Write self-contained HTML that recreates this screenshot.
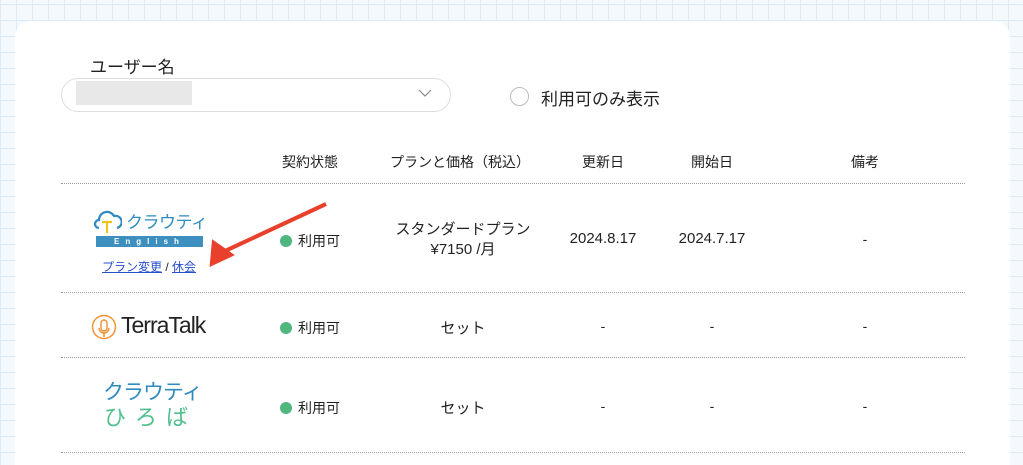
<!DOCTYPE html>
<html style="overflow:hidden;height:465px"><head><meta charset="utf-8"><style>
*{margin:0;padding:0;box-sizing:border-box}
body{width:1023px;height:465px;overflow:hidden;position:relative;font-family:"Liberation Sans","Noto Sans CJK JP",sans-serif;color:#222;
background-color:#f4f9fd;background-image:linear-gradient(#dcebf6 1px,transparent 1px),linear-gradient(90deg,#dcebf6 1px,transparent 1px);background-size:16px 16px;background-position:0 4px}
.card{position:absolute;left:15px;top:21px;width:995px;height:444px;background:#fff;border-radius:16px 16px 0 0}
.a{position:absolute;white-space:nowrap}
.c{position:absolute;text-align:center;transform:translateX(-50%);white-space:nowrap;font-size:14px}
.d{font-size:15px}
.line{position:absolute;left:61px;width:904px;border-top:1px dotted #999}
.dot{display:inline-block;width:12px;height:12px;border-radius:50%;background:#4fb67e;vertical-align:-1px;margin-right:6px}
</style></head><body>
<div class="card"></div>
<div class="a" style="left:90px;top:53px;font-size:17px">ユーザー名</div>
<div class="a" style="left:61px;top:78px;width:390px;height:34px;border:1px solid #ddd;border-radius:17px;background:#fff"></div>
<div class="a" style="left:76px;top:81px;width:116px;height:24px;background:#e8e8e8"></div>
<svg class="a" style="left:418px;top:89px" width="14" height="9"><path d="M1 1l6 6 6-6" fill="none" stroke="#888" stroke-width="1.2"/></svg>
<div class="a" style="left:510px;top:87px;width:19px;height:19px;border:1px solid #bbb;border-radius:50%"></div>
<div class="a" style="left:541px;top:85px;font-size:17px">利用可のみ表示</div>

<div class="c" style="left:310px;top:152px">契約状態</div>
<div class="c" style="left:460px;top:152px">プランと価格（税込）</div>
<div class="c" style="left:603px;top:152px">更新日</div>
<div class="c" style="left:712px;top:152px">開始日</div>
<div class="c" style="left:865px;top:152px">備考</div>
<div class="line" style="top:183px"></div>
<div class="line" style="top:292px"></div>
<div class="line" style="top:357px"></div>
<div class="line" style="top:452px"></div>

<!-- row1 logo -->
<svg class="a" style="left:94px;top:208px" width="28" height="26"><path d="M5 20a4 4 0 0 1 0-8 8 8 0 0 1 15-4 6 6 0 0 1 3 12" fill="none" stroke="#2f8bbf" stroke-width="2.2"/><path d="M8 14h10M13 14v11" stroke="#f0c419" stroke-width="2.2"/></svg>
<div class="a" style="left:126px;top:208px;font-size:17px;color:#2f8bbf;letter-spacing:-0.5px">クラウティ</div>
<div class="a" style="left:96px;top:236px;width:107px;height:11px;background:#3c8fbf;color:#fff;font-size:8px;line-height:11px;text-align:center;letter-spacing:6px;font-weight:bold">English</div>
<div class="a" style="left:102px;top:258px;font-size:12px;color:#2a4fcf"><u>プラン変更</u> <span style="color:#222">/</span> <u>休会</u></div>
<div class="c" style="left:310px;top:231px"><span class="dot"></span>利用可</div>
<div class="c d" style="left:463px;top:220px;line-height:20px">スタンダードプラン<br>¥7150 /月</div>
<div class="c d" style="left:603px;top:230px">2024.8.17</div>
<div class="c d" style="left:712px;top:230px">2024.7.17</div>
<div class="c" style="left:865px;top:231px">-</div>
<svg class="a" style="left:0;top:0" width="1023" height="465"><line x1="326" y1="204" x2="225" y2="251" stroke="#e8402a" stroke-width="4"/><polygon points="204,262 218,238 232,262" fill="#e8402a" transform="rotate(-25 218 252)"/></svg>

<!-- row2 -->
<svg class="a" style="left:91px;top:314px" width="28" height="28"><circle cx="13" cy="13" r="11.5" fill="none" stroke="#f0943a" stroke-width="1.5"/><rect x="10" y="6" width="6" height="11" rx="3" fill="none" stroke="#f0943a" stroke-width="1.5"/><path d="M8 14a5 5 0 0 0 10 0M13 19v4" fill="none" stroke="#f0943a" stroke-width="1.5"/></svg>
<div class="a" style="left:121px;top:312px;font-size:23px;color:#222;letter-spacing:-1px">TerraTalk</div>
<div class="c" style="left:310px;top:318px"><span class="dot"></span>利用可</div>
<div class="c d" style="left:463px;top:317px">セット</div>
<div class="c" style="left:603px;top:318px">-</div>
<div class="c" style="left:712px;top:318px">-</div>
<div class="c" style="left:865px;top:318px">-</div>

<!-- row3 -->
<div class="a" style="left:103px;top:380px;font-size:21px;color:#2f8bbf;letter-spacing:-1px;line-height:26px">クラウティ</div>
<div class="a" style="left:104px;top:405px;font-size:22px;color:#4fc08d;letter-spacing:9px;line-height:26px">ひろば</div>
<div class="c" style="left:310px;top:398px"><span class="dot"></span>利用可</div>
<div class="c d" style="left:463px;top:397px">セット</div>
<div class="c" style="left:603px;top:398px">-</div>
<div class="c" style="left:712px;top:398px">-</div>
<div class="c" style="left:865px;top:398px">-</div>
</body></html>
